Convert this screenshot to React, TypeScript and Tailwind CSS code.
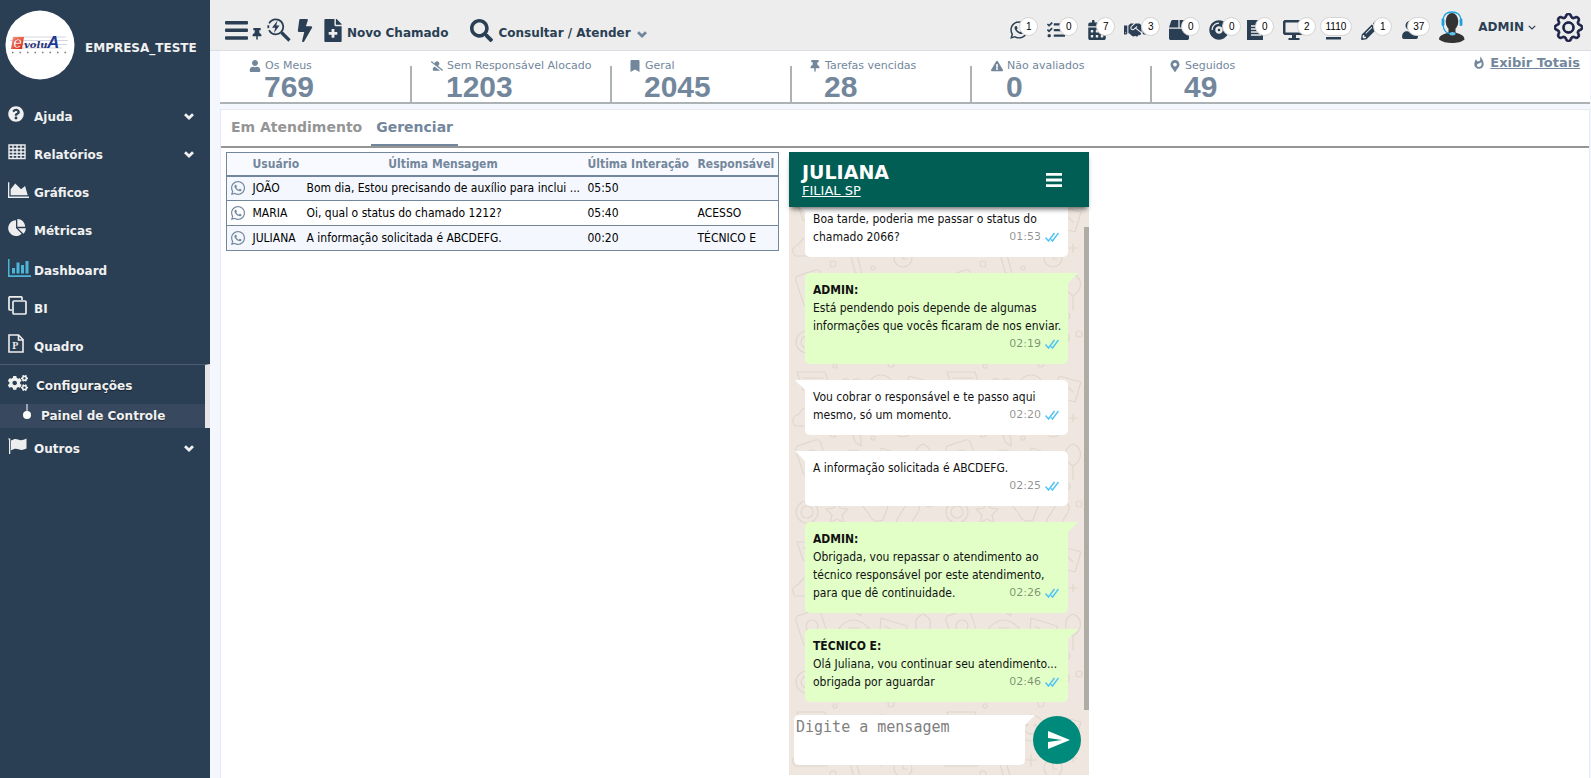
import type { ReactNode } from 'react';
import {
  FaBolt, FaBookmark, FaBox, FaCalendarAlt, FaCogs, FaCompactDisc, FaExclamationTriangle,
  FaFileMedical, FaHandshake, FaMapMarkerAlt, FaPencilAlt, FaQuestionCircle, FaSearch, FaTasks,
  FaThumbtack, FaUser, FaUserSlash, FaWhatsapp,
} from 'react-icons/fa';
import { BsGear } from 'react-icons/bs';
import { MdWhatshot } from 'react-icons/md';

const sans = "font-['DejaVu_Sans',Verdana,sans-serif]";
const narrow = "font-['DejaVu_Sans_Condensed',Tahoma,sans-serif]";

function Logo() {
  return (
    <svg viewBox="0 0 70 70" className="size-[70px] shrink-0" role="img" aria-label="evoluA software">
      <defs>
        <linearGradient id="red" x1="0" y1="0" x2="1" y2="1">
          <stop offset="0" stopColor="#f59a80" />
          <stop offset="1" stopColor="#d8200c" />
        </linearGradient>
      </defs>
      <circle cx="35" cy="35" r="34.500" fill="#fff" />
      <path d="M9 27h52M5 30.500h58M13 34.500h49M9 38h48" stroke="#d4d4de" strokeWidth="1" />
      <path d="M8 27h11l-2 12H6z" fill="url(#red)" />
      <text x="8" y="38" fontSize="16" fontWeight="700" fontStyle="italic" fontFamily="Liberation Sans" fill="#fff" stroke="#d8301c" strokeWidth=".6">e</text>
      <text x="19" y="38" fontSize="10" fontWeight="700" fontStyle="italic" fontFamily="DejaVu Serif" fill="#2c3578">volu</text>
      <text x="42" y="38" fontSize="17" fontWeight="700" fontStyle="italic" fontFamily="Liberation Sans" fill="#1c3a94">A</text>
      <path d="M7 42.500h54" stroke="#777" strokeWidth="1.500" strokeDasharray="1.500 6" />
    </svg>
  );
}

function Chevron() {
  return (
    <svg viewBox="0 0 10 7" className="h-[7px] w-[10px]" fill="none" stroke="currentColor" strokeWidth="2.800" aria-hidden="true">
      <path d="M1 1.300l4 3.700 4-3.700" />
    </svg>
  );
}

const icons = {
  table: (
    <svg viewBox="0 0 18 16" className="h-4 w-[18px]">
      <path d="M1 1h16v13.500H1zM1 4.500h16M1 8h16M1 11.300h16M5 1v13.500M9 1v13.500M13 1v13.500" fill="none" stroke="#eee" strokeWidth="1.400" />
    </svg>
  ),
  area: (
    <svg viewBox="0 128 2048 1536" className="h-4 w-[21px]" fill="#eee">
      <path d="M2048 1536v128h-2048v-1536h128v1408h1920zM1664 512l256 896h-1664v-576l448-576 576 576z" />
    </svg>
  ),
  pie: (
    <svg viewBox="0 0 1728 1664" className="h-[17px] w-[18px]" fill="#eee">
      <path d="M768 890l546 546q-106 108-247.500 168t-298.500 60q-209 0-385.500-103t-279.500-279.500-103-385.500 103-385.500 279.500-279.500 385.500-103v762zm187 6h773q0 157-60 298.500t-168 247.500zm709-128h-768v-768q209 0 385.500 103t279.500 279.500 103 385.500z" />
    </svg>
  ),
  bars: (
    <svg viewBox="0 0 23 18" className="h-[18px] w-[23px]" fill="#4cb5d8">
      <path d="M0 0h1.500v16.200H23V18H0zM4 9h3v5.500H4zM8.500 3.500h3v11h-3zM13 6h3v8.500h-3zM17.500 2h3v12.500h-3z" />
    </svg>
  ),
  clone: (
    <svg viewBox="0 0 19 19" className="size-[19px]" fill="none" stroke="#eee" strokeWidth="1.700">
      <rect x="5" y="5" width="13" height="13" rx="1" />
      <path d="M14 4V1.800a1 1 0 0 0-1-1H2a1 1 0 0 0-1 1V13a1 1 0 0 0 1 1h2" />
    </svg>
  ),
  file: (
    <svg viewBox="0 0 16 19" className="h-[19px] w-4" fill="none" stroke="#eee" strokeWidth="1.600">
      <path d="M1 1h9.500L15 5.500V18H1zM10.500 1v5H15" />
      <text x="4.200" y="15.300" fontSize="10" fontWeight="700" fontFamily="Liberation Serif" fill="#eee" stroke="none">P</text>
    </svg>
  ),
  flag: (
    <svg viewBox="0 0 19 16" className="h-4 w-[19px]" fill="#eee">
      <path d="M0 .5h2.300V16H1V2zM3 2.500c3-1.500 4.500-2 7-1 3 1.200 5 .6 8.500-1v10c-3 1.500-5 2-8 .8-2.500-1-4.500-.6-7.500 1z" />
    </svg>
  ),
};

type Item = { label: string; icon: ReactNode; more?: boolean };
const menu: Item[] = [
  { label: 'Ajuda', icon: <FaQuestionCircle className="size-4" />, more: true },
  { label: 'Relatórios', icon: icons.table, more: true },
  { label: 'Gráficos', icon: icons.area },
  { label: 'Métricas', icon: icons.pie },
  { label: 'Dashboard', icon: icons.bars },
  { label: 'BI', icon: icons.clone },
  { label: 'Quadro', icon: icons.file },
];

function MenuItem({ label, icon, more }: Item) {
  return (
    <li>
      <a href="#" className="flex h-[38px] items-center pt-[3px] pr-4 pl-2">
        <span className="flex w-[26px] shrink-0 pb-[6px]">{icon}</span>
        <span className="flex-1">{label}</span>
        {more && <Chevron />}
      </a>
    </li>
  );
}

function Sidebar() {
  return (
    <aside className="w-[210px] shrink-0 bg-[#2a3f54] text-[12px] font-bold text-[#f1f1f1]">
      <div className="flex items-center gap-[10px] pt-[10px] pl-[5px]">
        <Logo />
        <span className="pt-[6px]">EMPRESA_TESTE</span>
      </div>
      <nav className="pt-4">
        <ul>
          {menu.slice(0, 4).map((m) => <MenuItem key={m.label} {...m} />)}
        </ul>
        <ul className="pt-[2px]">
          {menu.slice(4).map((m) => <MenuItem key={m.label} {...m} />)}
        </ul>
        <ul className="border-t border-r-5 border-t-[#4b5c70] border-r-[#e6e6e6] [text-shadow:0_1px_1px_rgba(0,0,0,0.5)]">
          <li>
            <a href="#" className="flex h-[39px] items-center pt-[2px] pl-2">
              <span className="w-7 pb-[6px]"><FaCogs className="size-5" /></span>
              Configurações
            </a>
          </li>
          <li className="bg-[#38495f]">
            <a href="#" className="flex h-6 items-center gap-[10px] pl-[23px]">
              <svg viewBox="0 0 8 24" className="h-6 w-2" fill="#fff"><path d="M3.500 0h1v10h-1z" /><circle cx="4" cy="11" r="4" /></svg>
              Painel de Controle
            </a>
          </li>
        </ul>
        <ul>
          <MenuItem label="Outros" icon={icons.flag} more />
        </ul>
      </nav>
    </aside>
  );
}

const counters: { name: string; count: string; width: string; icon: ReactNode }[] = [
  { name: 'WhatsApp', count: '1', width: 'w-[29px]', icon: <FaWhatsapp className="size-5" /> },
  { name: 'Tarefas', count: '0', width: 'w-[31px]', icon: <FaTasks className="size-[18px]" /> },
  { name: 'Agenda', count: '7', width: 'w-[28px]', icon: <FaCalendarAlt className="size-5" /> },
  { name: 'Contratos', count: '3', width: 'w-[36px]', icon: <FaHandshake className="size-[22px]" /> },
  { name: 'Produtos', count: '0', width: 'w-[31px]', icon: <FaBox className="size-5" /> },
  { name: 'Mídias', count: '0', width: 'w-[32px]', icon: <FaCompactDisc className="size-5" /> },
  {
    name: 'Documentos', count: '0', width: 'w-[27px] -ml-[3px]',
    icon: (
      <svg viewBox="0 0 16 20" className="h-5 w-4">
        <path d="M0 0h16v20H0z" fill="#2a3f54" />
        <path d="M4 6h8M4 9h6M4 12h8M4 15h10" stroke="#ededed" strokeWidth="1.300" />
      </svg>
    ),
  },
  {
    name: 'Equipamentos', count: '2', width: 'w-[33px]',
    icon: (
      <svg viewBox="0 0 22 20" className="h-5 w-[22px]" fill="#2a3f54">
        <path fillRule="evenodd" d="M1.500 0h19L22 1.500v12L20.500 15h-19L0 13.500v-12zM2.500 2.500v10h17v-10z" />
        <path d="M9 15h4v3h3.500v2h-11v-2H9z" />
      </svg>
    ),
  },
  {
    name: 'Ativos', count: '1110', width: 'w-[34px] -ml-[7px]',
    icon: <svg viewBox="0 0 24 20" className="h-5 w-6" fill="#2a3f54"><path d="M8 17h15v2.500H8z" /></svg>,
  },
  { name: 'Edições', count: '1', width: 'w-[31px]', icon: <FaPencilAlt className="size-[19px]" /> },
  { name: 'Clientes', count: '37', width: 'w-[29px]', icon: <FaUser className="size-[18px]" /> },
];

function Avatar() {
  return (
    <svg viewBox="0 0 28 33" className="h-[33px] w-7">
      <ellipse cx="14" cy="10.500" rx="6.300" ry="8.500" fill="#333" />
      <path d="M10.500 17h7v4.500c3 1.500 9 2 9 7C24 31 19 32 14 32S4 31 1 28.500c0-5 6.500-5.500 9.500-7z" fill="#333" />
      <path d="M5 8C6 2.500 10 1 14 1s8 1.500 9 7" fill="none" stroke="#1ba1e2" strokeWidth="1.300" />
      <rect x="3.600" y="7.500" width="2.800" height="7.500" rx="1.300" fill="#1ba1e2" />
      <rect x="21.600" y="7.500" width="2.800" height="7.500" rx="1.300" fill="#1ba1e2" />
      <path d="M5 14c.5 6 4 8.500 8 8.800" fill="none" stroke="#1ba1e2" strokeWidth="1.200" />
      <ellipse cx="14.500" cy="22.800" rx="3" ry="1.700" fill="#5cc6f2" />
    </svg>
  );
}

function TopBar() {
  return (
    <header className="flex h-[51px] items-center justify-between border-b border-[#d9dee4] bg-[#ededed] pt-2 pr-2 pl-[15px] text-[#2a3f54]">
      <div className="flex items-center pt-[2px] text-[12px] font-bold">
        <button aria-label="Menu">
          <svg viewBox="0 0 23 19" className="h-[19px] w-[23px]" fill="#2a3f54">
            <rect width="23" height="3.500" rx="1" /><rect y="7.500" width="23" height="3.500" rx="1" /><rect y="15.300" width="23" height="3.500" rx="1" />
          </svg>
        </button>
        <button aria-label="Fixar" className="ml-[3px] pt-2"><FaThumbtack className="size-3" /></button>
        <button aria-label="Busca rápida" className="ml-1">
          <svg viewBox="0 0 24 24" className="size-6" fill="none" stroke="#2a3f54">
            <circle cx="8.800" cy="8.800" r="7.500" strokeWidth="1.800" strokeDasharray="20 2 3 2" />
            <path d="M14.500 14.500l8 8" strokeWidth="3.200" />
            <path d="M10.500 2.500L5 9.800h3.200L7 15l5.500-7.500H9.300z" fill="#2a3f54" stroke="none" />
          </svg>
        </button>
        <button aria-label="Ações rápidas" className="ml-1"><FaBolt className="h-[23px] w-[20px]" /></button>
        <a href="#" className="ml-2 flex items-center gap-1">
          <FaFileMedical className="h-[23px] w-5" />
          <span className="pt-[5px]">Novo Chamado</span>
        </a>
        <a href="#" className="ml-[22px] flex items-center">
          <FaSearch className="size-[23px]" />
          <span className="pt-[5px] pl-[5px]">Consultar / Atender</span>
          <span className="pt-2 pl-[6px] text-[#73879c]"><Chevron /></span>
        </a>
      </div>
      <div className="flex items-center">
        <div className="flex items-center gap-[9px]">
          {counters.map((c) => (
            <button key={c.name} aria-label={c.name} className={`relative flex h-6 items-center pt-[2px] ${c.width}`}>
              <span className="flex shrink-0">{c.icon}</span>
              <span className="absolute top-0 right-0 flex h-[19px] min-w-[19px] items-center justify-center rounded-full border border-[#d4d4d4] bg-white px-[5px] font-['Liberation_Sans',Arial,sans-serif] text-[10px] text-black">
                {c.count}
              </span>
            </button>
          ))}
        </div>
        <span className="ml-2 pb-1"><Avatar /></span>
        <button className="ml-3 flex items-center gap-1 pb-1 text-[12px] font-bold">
          ADMIN
          <svg viewBox="0 0 8 5" className="h-[5px] w-2" fill="none" stroke="#2a3f54" strokeWidth="1.200"><path d="M.8.8L4 4 7.200.8" /></svg>
        </button>
        <button aria-label="Configurações" className="ml-[18px] pb-1 text-[#1c2147]"><BsGear className="size-[29px] stroke-[0.500]" /></button>
      </div>
    </header>
  );
}

const stats = [
  { label: 'Os Meus', value: '769', icon: <FaUser />, width: 'w-[192px] pl-7' },
  { label: 'Sem Responsável Alocado', value: '1203', icon: <FaUserSlash />, width: 'w-[200px] pl-[18px]' },
  { label: 'Geral', value: '2045', icon: <FaBookmark />, width: 'w-[180px] pl-4' },
  { label: 'Tarefas vencidas', value: '28', icon: <FaThumbtack />, width: 'w-[180px] pl-4' },
  { label: 'Não avaliados', value: '0', icon: <FaExclamationTriangle />, width: 'w-[180px] pl-[18px]' },
  { label: 'Seguidos', value: '49', icon: <FaMapMarkerAlt />, width: 'w-[180px] pl-4' },
];

function Stats() {
  return (
    <section className="flex h-[53px] border-b-2 border-[#adb2b5] bg-white pr-[10px] text-[#73879c]">
      {stats.map((s, i) => (
        <div key={s.label} className={`relative pt-2 ${s.width}`}>
          <div className="flex items-center gap-1 text-[11px] leading-[14px] whitespace-nowrap">
            <span className="flex w-[13px] justify-center text-[12px]">{s.icon}</span>
            {s.label}
          </div>
          <div className="pl-4 font-['Liberation_Sans',Arial,sans-serif] text-[30px] leading-[27px] font-bold">{s.value}</div>
          {i < 5 && <span className="absolute right-0 bottom-0 h-9 w-[2px] bg-[#adb2b5]" />}
        </div>
      ))}
      <a href="#" className="ml-auto flex h-6 items-center gap-1 text-[13px] font-bold whitespace-nowrap">
        <MdWhatshot className="size-[14px]" />
        <span className="underline">Exibir Totais</span>
      </a>
    </section>
  );
}

const rows = [
  ['JOÃO', 'Bom dia, Estou precisando de auxílio para inclui ...', '05:50', ''],
  ['MARIA', 'Oi, qual o status do chamado 1212?', '05:40', 'ACESSO'],
  ['JULIANA', 'A informação solicitada é ABCDEFG.', '00:20', 'TÉCNICO E'],
];

function Conversations() {
  return (
    <table className={`w-[553px] shrink-0 table-fixed border-collapse border border-[#73879c] text-left text-[12px] leading-4 text-black ${narrow}`}>
      <thead>
        <tr className="h-[23px] border-b-2 border-[#73879c] bg-[#f9faff] text-[#73879c]">
          <th aria-label="Canal" className="w-[26px]" />
          <th className="w-[54px]">Usuário</th>
          <th className="w-[281px] pr-2 text-center">Última Mensagem</th>
          <th className="w-[110px] whitespace-nowrap">Última Interação</th>
          <th>Responsável</th>
        </tr>
      </thead>
      <tbody>
        {rows.map(([user, msg, time, owner]) => (
          <tr key={user} className="h-[25px] border-b border-[#73879c] odd:bg-[#f4f7fe]">
            <td className="pl-[3px]"><FaWhatsapp className="size-4 text-[#73879c]" /></td>
            <td>{user}</td>
            <td className="whitespace-nowrap">{msg}</td>
            <td>{time}</td>
            <td>{owner}</td>
          </tr>
        ))}
      </tbody>
    </table>
  );
}

function Wallpaper() {
  return (
    <svg className="absolute inset-0 size-full" aria-hidden="true">
      <defs>
        <pattern id="doodles" width="150" height="170" patternUnits="userSpaceOnUse">
          <g fill="none" stroke="#e0d7ce" strokeWidth="1.200" strokeLinejoin="round" strokeLinecap="round">
            <circle cx="18" cy="20" r="11" /><circle cx="18" cy="20" r="6" />
            <path d="M48 8l3 8 8 1-6 6 2 8-7-4-7 4 2-8-6-6 8-1z" />
            <path d="M72 12l30-6-8 22q-10 4-14-6z" />
            <rect x="112" y="8" width="14" height="30" rx="7" transform="rotate(32 119 23)" />
            <circle cx="140" cy="12" r="3" /><circle cx="66" cy="36" r="2" /><circle cx="102" cy="42" r="3" />
            <path d="M8 50h28l6 18H14zM14 56h20M16 62h20" />
            <path d="M62 60c-6-8-14 0-8 7l8 8 8-8c6-7-2-15-8-7z" />
            <circle cx="92" cy="66" r="13" /><circle cx="88" cy="63" r="1" /><circle cx="96" cy="63" r="1" /><path d="M86 69q6 6 12 0" />
            <path d="M120 54l22 6-6 20-22-6zM124 60l10 10" />
            <path d="M10 92q8-14 20 0 12 0 8 12H6q-6-8 4-12z" />
            <path d="M58 90l8 30M64 88l8 30M58 90q2-4 6-2M66 120l6 4v-6" />
            <path d="M92 92v12M86 98h12M134 92v8M130 96h8" />
            <circle cx="114" cy="106" r="9" /><path d="M108 99l-4-4M120 99l4-4M114 101v6h4" />
            <rect x="10" y="120" width="26" height="32" rx="4" transform="rotate(-18 23 136)" /><circle cx="23" cy="134" r="6" />
            <path d="M50 136q14-16 30 0-14 16-30 0zM60 136h10" />
            <path d="M92 126l26 8-2 22-26-6zM96 134l16 10" />
            <path d="M134 122c-10 4-10 16 0 22 10-6 10-18 0-22zM134 144v14" />
            <circle cx="48" cy="158" r="4" /><circle cx="80" cy="162" r="2" /><circle cx="128" cy="164" r="3" />
            <circle cx="46" cy="44" r="2" /><circle cx="44" cy="112" r="3" /><circle cx="84" cy="116" r="2" /><circle cx="104" cy="86" r="2" />
          </g>
        </pattern>
      </defs>
      <rect width="100%" height="100%" fill="url(#doodles)" />
    </svg>
  );
}

type Message = { from?: string; lines: string[]; time: string; ownLine?: boolean };
const messages: Message[] = [
  { lines: ['Boa tarde, poderia me passar o status do', 'chamado 2066?'], time: '01:53' },
  { from: 'ADMIN:', lines: ['Está pendendo pois depende de algumas', 'informações que vocês ficaram de nos enviar.'], time: '02:19', ownLine: true },
  { lines: ['Vou cobrar o responsável e te passo aqui', 'mesmo, só um momento.'], time: '02:20' },
  { lines: ['A informação solicitada é ABCDEFG.'], time: '02:25', ownLine: true },
  { from: 'ADMIN:', lines: ['Obrigada, vou repassar o atendimento ao', 'técnico responsável por este atendimento,', 'para que dê continuidade.'], time: '02:26' },
  { from: 'TÉCNICO E:', lines: ['Olá Juliana, vou continuar seu atendimento...', 'obrigada por aguardar'], time: '02:46' },
];

function Stamp({ time }: { time: string }) {
  return (
    <span className={`ml-auto flex items-center gap-1 pr-px text-[11px] text-black/45 ${sans}`}>
      {time}
      <svg viewBox="0 0 14 10" className="h-[10px] w-[14px]" fill="none" stroke="#4fc3f7" strokeWidth="1.500"><path d="M.5 5.500L3.500 9l6-8M6 7.500L7.500 9l6-8" /></svg>
    </span>
  );
}

function Bubble({ from, lines, time, ownLine }: Message) {
  return (
    <li className={`relative rounded-[5px] px-2 pt-2 pb-[11px] leading-[18px] whitespace-nowrap ${from ? 'rounded-tr-none bg-[#e1ffc7]' : 'rounded-tl-none bg-white'}`}>
      {from
        ? <span className="absolute top-0 left-full h-[10px] w-[10px] bg-[#e1ffc7] [clip-path:polygon(0_0,100%_0,0_100%)]" />
        : <span className="absolute top-0 right-full h-[10px] w-[10px] bg-white [clip-path:polygon(0_0,100%_0,100%_100%)]" />}
      {from && <strong className="block">{from}</strong>}
      {lines.map((line, i) => (
        <div key={line} className="flex">
          {line}
          {!ownLine && i === lines.length - 1 && <Stamp time={time} />}
        </div>
      ))}
      {ownLine && <div className="flex"><Stamp time={time} /></div>}
    </li>
  );
}

function Chat() {
  return (
    <section className="relative flex h-[calc(100vh-155px)] w-[300px] shrink-0 flex-col bg-[#efe7df]">
      <Wallpaper />
      <header className="relative z-10 flex h-[55px] shrink-0 items-center justify-between bg-[#005e54] pr-[27px] pl-[13px] text-white shadow-[0_4px_5px_-2px_rgba(0,0,0,0.6)]">
        <div className="pt-[2px]">
          <h2 className="text-[19px] leading-5 font-bold">JULIANA</h2>
          <a href="#" className="block text-[13px] leading-[18px] underline">FILIAL SP</a>
        </div>
        <button aria-label="Opções">
          <svg viewBox="0 0 16 14" className="h-[14px] w-4" fill="#fff"><path d="M0 0h16v2.800H0zM0 5.600h16v2.800H0zM0 11.200h16V14H0z" /></svg>
        </button>
      </header>
      <div className="relative min-h-0 flex-1 overflow-hidden">
        <ul className={`flex h-full flex-col justify-end gap-4 pr-[21px] pb-[13px] pl-4 text-[12px] text-[#111] ${narrow}`}>
          {messages.map((m) => <Bubble key={m.time} {...m} />)}
        </ul>
        <span className="absolute top-5 right-0 bottom-[5px] w-[5px] bg-[#afaba5]" />
      </div>
      <form className="relative flex shrink-0 items-center pr-2 pb-[10px] pl-[5px]">
        <textarea aria-label="Mensagem" placeholder="Digite a mensagem" className="block h-[50px] min-w-0 flex-1 resize-none rounded-[5px] rounded-tr-none bg-white px-[2px] py-[3px] font-['DejaVu_Sans_Mono',monospace] text-[15px] leading-[18px] outline-none placeholder:text-[#808080]" />
        <span className="mr-[-2px] h-[10px] w-[10px] self-start bg-white [clip-path:polygon(0_0,100%_0,0_100%)]" />
        <button type="button" aria-label="Enviar" className="flex size-12 items-center justify-center rounded-full bg-[#008a7c] pl-1">
          <svg viewBox="0 0 22 18" className="h-[18px] w-[22px]" fill="#fff"><path d="M0 0l22 9L0 18v-7l14-2L0 7z" /></svg>
        </button>
      </form>
    </section>
  );
}

export default function App() {
  return (
    <div className={`flex min-h-screen bg-[#f4f7fe] ${sans}`}>
      <Sidebar />
      <div className="flex min-w-0 flex-1 flex-col">
        <TopBar />
        <main className="flex flex-1 flex-col gap-[5px] pr-px pl-[10px]">
          <Stats />
          <section className="flex-1 border border-b-0 border-[#e6e9ed] bg-white">
            <div role="tablist" className="flex h-[38px] border-b-2 border-[#959595] pl-[10px] text-[14px] font-bold text-[#959595]">
              <button role="tab" aria-selected="false" className="pb-[2px]">Em Atendimento</button>
              <button role="tab" aria-selected="true" className="ml-[9px] border-b-2 border-[#73879c] px-[5px] text-[#73879c]">Gerenciar</button>
            </div>
            <div className="flex items-start gap-[10px] pt-1 pl-[5px]">
              <Conversations />
              <Chat />
            </div>
          </section>
        </main>
      </div>
    </div>
  );
}
